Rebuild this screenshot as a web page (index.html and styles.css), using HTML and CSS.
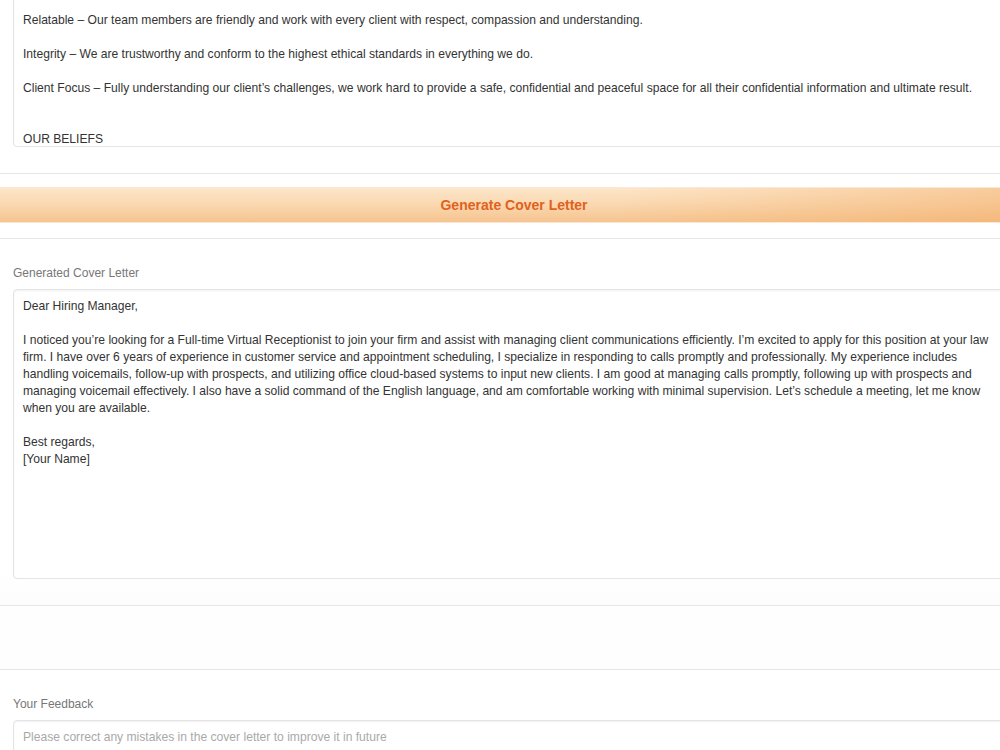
FILE: index.html
```html
<!DOCTYPE html>
<html lang="en">
<head>
<meta charset="utf-8">
<title>Cover Letter</title>
<link rel="stylesheet" href="styles.css">
</head>
<body>
<div class="page">
  <section class="section section-top">
    <div class="field field-top">Relatable – Our team members are friendly and work with every client with respect, compassion and understanding.

Integrity – We are trustworthy and conform to the highest ethical standards in everything we do.

Client Focus – Fully understanding our client’s challenges, we work hard to provide a safe, confidential and peaceful space for all their confidential information and ultimate result.


OUR BELIEFS</div>
  </section>
  <section class="section section-button">
    <button class="generate" type="button">Generate Cover Letter</button>
  </section>
  <section class="section section-letter">
    <div class="label">Generated Cover Letter</div>
    <div class="field field-letter">Dear Hiring Manager,

I noticed you’re looking for a Full-time Virtual Receptionist to join your firm and assist with managing client communications efficiently. I’m excited to apply for this position at your law firm. I have over 6 years of experience in customer service and appointment scheduling, I specialize in responding to calls promptly and professionally. My experience includes handling voicemails, follow-up with prospects, and utilizing office cloud-based systems to input new clients. I am good at managing calls promptly, following up with prospects and managing voicemail effectively. I also have a solid command of the English language, and am comfortable working with minimal supervision. Let’s schedule a meeting, let me know when you are available.

Best regards,
[Your Name]</div>
  </section>
  <section class="section section-empty"></section>
  <section class="section section-feedback">
    <div class="label">Your Feedback</div>
    <div class="field field-feedback"><span class="placeholder">Please correct any mistakes in the cover letter to improve it in future</span></div>
  </section>
</div>
</body>
</html>
```
FILE: styles.css
```css
html, body {
  margin: 0;
  padding: 0;
  overflow: hidden;
  background: #ffffff;
}
body {
  font-family: "Liberation Sans", Arial, sans-serif;
  font-size: 12px;
  line-height: 17px;
  color: #333333;
}
.page {
  width: 1028px;
}
.section {
  border-bottom: 1px solid #e6e6e6;
  padding: 0 13px;
}
.field {
  box-sizing: border-box;
  width: 995px;
  border: 1px solid #e4e4e4;
  border-radius: 4px;
  background: #ffffff;
  padding: 8px 12px 6px 9px;
  font-size: 12.1px;
  white-space: pre-wrap;
  overflow: hidden;
  box-shadow: inset 0 1px 2px rgba(0, 0, 0, 0.06);
}
.section-top {
  padding-bottom: 26px;
}
.field-top {
  margin-top: -4px;
  height: 151px;
  padding-top: 15px;
}
.section-button {
  padding: 13px 0 15px;
}
.generate {
  display: block;
  width: 100%;
  height: 36px;
  border: 0;
  border-top: 1px solid #fbe9d6;
  border-bottom: 1px solid #fbe6d2;
  margin: 0;
  padding: 0;
  font-family: "Liberation Sans", Arial, sans-serif;
  font-size: 14px;
  font-weight: bold;
  color: #e0621e;
  background:
    linear-gradient(to right, rgba(244, 175, 110, 0) 0%, rgba(244, 175, 110, 0) 60%, rgba(242, 168, 96, 0.45) 100%),
    linear-gradient(to bottom, #fde6ca 0%, #fad9b2 45%, #f6c48f 100%);
  cursor: pointer;
}
.label {
  color: #777777;
  margin-bottom: 7px;
}
.section-letter {
  padding-top: 26px;
  padding-bottom: 26px;
  background: linear-gradient(to bottom, #ffffff 0%, #ffffff 90%, #fcfcfc 100%);
}
.field-letter {
  height: 290px;
}
.section-empty {
  height: 63px;
  background: #fefefe;
}
.section-feedback {
  padding-top: 26px;
  border-bottom: 0;
}
.field-feedback {
  height: 80px;
}
.placeholder {
  color: #a9a9a9;
}
```
